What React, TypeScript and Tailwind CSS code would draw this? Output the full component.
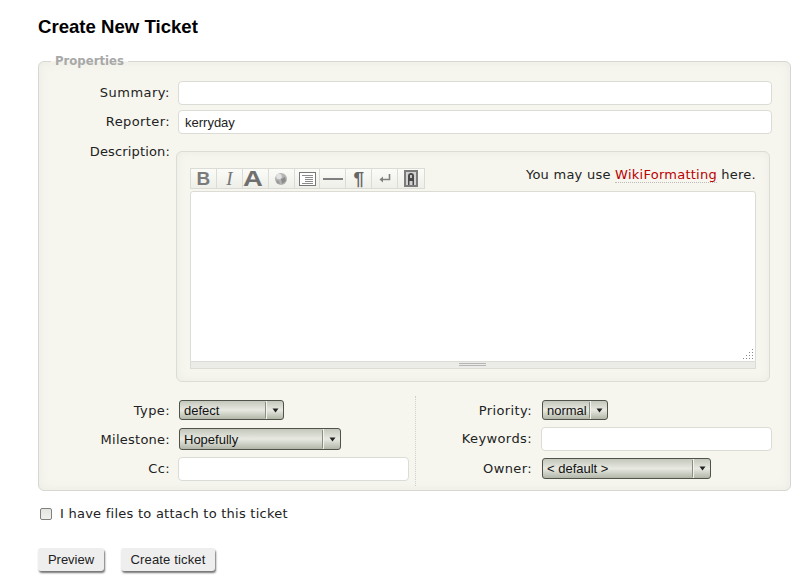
import React from "react";

const body = "font-['DejaVu_Sans',sans-serif] text-[13px] text-[#222]";
const arial = "font-['Liberation_Sans',Arial,sans-serif]";

function TextInput({ value, className = "" }: { value?: string; className?: string }) {
  return (
    <input
      readOnly
      value={value ?? ""}
      className={`h-6 rounded-[4px] border border-[#dcdcd6] bg-white px-[6px] text-[13px] text-[#222] outline-none ${arial} ${className}`}
    />
  );
}

function Select({ label, className = "" }: { label: string; className?: string }) {
  return (
    <div
      className={`flex items-stretch rounded-[3px] border border-[#4f5349] bg-gradient-to-b from-[#c4c7bb] via-[#e8eae2] to-[#b2b6a8] text-[13px] text-[#111] ${arial} ${className}`}
    >
      <span className="flex flex-1 items-center pt-[1px] pl-1 whitespace-nowrap">{label}</span>
      <span className="my-[1px] w-px bg-[#8b8e83]" />
      <span className="flex w-[17px] items-center justify-center border-l border-[#f2f3ee]">
        <svg width="7" height="5" viewBox="0 0 7 5">
          <path d="M0.5 0.5h6L3.5 4.5z" fill="#222" />
        </svg>
      </span>
    </div>
  );
}

function Label({
  children,
  className = "",
  track = "tracking-[0.4px]",
}: {
  children: React.ReactNode;
  className?: string;
  track?: string;
}) {
  return <span className={`text-right ${track} ${className}`}>{children}</span>;
}

function ToolButton({ children, last }: { children: React.ReactNode; last?: boolean }) {
  return (
    <div className={`flex h-full w-[26px] items-center justify-center ${last ? "" : "border-r border-[#dcdcd6]"}`}>
      {children}
    </div>
  );
}

function Toolbar() {
  return (
    <div className="flex h-[21px] w-[235px] border border-[#dcdcd6] bg-gradient-to-b from-[#fbfbf8] to-[#efefe9]">
      <ToolButton>
        <span className={`text-[19px] leading-none font-bold text-[#7b7b7b] ${arial}`}>B</span>
      </ToolButton>
      <ToolButton>
        <span className="font-['Liberation_Serif',serif] text-[19px] leading-none text-[#777] italic">I</span>
      </ToolButton>
      <ToolButton>
        <span className={`mr-1 inline-block scale-x-[1.25] text-[22px] leading-[19px] font-bold text-[#6f6f6f] ${arial}`}>A</span>
      </ToolButton>
      <ToolButton>
        <svg width="14" height="14" viewBox="0 0 14 14">
          <circle cx="7" cy="7" r="6" fill="#b4b4b4" />
          <circle cx="5" cy="4.5" r="2.8" fill="#e2e2e2" />
          <path d="M7 7l4-2 1 4-4 3z" fill="#8c8c8c" />
          <path d="M2 8l3 1 1 3-3-1z" fill="#989898" />
        </svg>
      </ToolButton>
      <ToolButton>
        <svg width="17" height="14" viewBox="0 0 17 14">
          <rect x="0.5" y="0.5" width="16" height="13" fill="#fff" stroke="#777" />
          <path d="M3 3.5h11M6 5.5h8M6 7.5h8M6 9.5h8M3 11.5h11" stroke="#8a8a8a" strokeWidth="1" />
        </svg>
      </ToolButton>
      <ToolButton>
        <div className="h-[2px] w-5 bg-[#808080]" />
      </ToolButton>
      <ToolButton>
        <span className={`text-[19px] leading-none font-bold text-[#666] ${arial}`}>¶</span>
      </ToolButton>
      <ToolButton>
        <svg width="12" height="9" viewBox="0 0 12 9">
          <path d="M10.5 0v5.5H3" fill="none" stroke="#808080" strokeWidth="1.6" />
          <path d="M4 2.5v6L0.5 5.5z" fill="#808080" />
        </svg>
      </ToolButton>
      <ToolButton last>
        <svg width="14" height="17" viewBox="0 0 14 17">
          <rect width="14" height="17" fill="#7c7c7c" />
          <rect x="2" y="2" width="10" height="13" fill="#d2d2d2" />
          <path d="M4 15V6a3 3 0 0 1 6 0v9h-1.500v-4h-3v4z" fill="#4a4a4a" />
          <rect x="6" y="5" width="2" height="3" fill="#c4c4c4" />
        </svg>
      </ToolButton>
    </div>
  );
}

function Editor() {
  return (
    <div className="w-[594px] rounded-[6px] border border-[#dcdcd6] bg-[#f6f6ef] px-[13px] pt-4 pb-[12px] shadow-[inset_0_0_10px_#ebebe4]">
      <div className="flex h-[22px] items-start justify-between">
        <Toolbar />
        <span className="-mt-[3px] tracking-[0.25px]">
          You may use{" "}
          <span className="border-b border-dotted border-[#bbb] text-[#b00]">WikiFormatting</span> here.
        </span>
      </div>
      <div className="relative mt-[1px] h-[171px] rounded-t-[3px] border border-[#dcdcd6] bg-white">
        <svg className="absolute right-[1px] bottom-[1px]" width="11" height="11" viewBox="0 0 11 11" fill="#888">
          <rect x="9" y="0" width="1" height="1" />
          <rect x="6" y="3" width="1" height="1" />
          <rect x="9" y="3" width="1" height="1" />
          <rect x="3" y="6" width="1" height="1" />
          <rect x="6" y="6" width="1" height="1" />
          <rect x="9" y="6" width="1" height="1" />
          <rect x="0" y="9" width="1" height="1" />
          <rect x="3" y="9" width="1" height="1" />
          <rect x="6" y="9" width="1" height="1" />
          <rect x="9" y="9" width="1" height="1" />
        </svg>
      </div>
      <div className="flex h-[7px] justify-center border-x border-b border-[#dcdcd6] bg-[#ebebe8]">
        <div className="mt-[1px] mr-[2px] h-[3px] w-[27px] border-y border-[#b5b5b5]" />
      </div>
    </div>
  );
}

export default function App() {
  return (
    <div className={`min-h-[578px] w-[802px] overflow-hidden bg-white pl-[38px] ${body}`}>
      <h1 className={`pt-[16px] text-[18.6px] leading-[22px] font-bold text-black ${arial}`}>Create New Ticket</h1>

      <fieldset className="mt-[17px] h-[436px] w-[753px] rounded-[6px] border border-[#d7d7d1] bg-[#f6f6ef] shadow-[inset_0_0_12px_#ebebe4]">
        <legend className="ml-[12px] px-1 text-[11.7px] leading-[13px] font-bold text-[#a8a8a8]">Properties</legend>

        <div className="flex flex-col pt-[13px]">
          <div className="flex h-6 items-center">
            <Label className="w-[131px]" track="tracking-[0.5px]">Summary:</Label>
            <TextInput className="ml-[8px] w-[594px]" />
          </div>
          <div className="mt-[5px] flex h-6 items-center">
            <Label className="w-[131px]">Reporter:</Label>
            <TextInput value="kerryday" className="ml-[8px] w-[594px]" />
          </div>
          <div className="mt-[17px] flex items-start">
            <Label className="-mt-[7px] w-[131px] leading-[16px]" track="tracking-[0.15px]">Description:</Label>
            <div className="ml-[6px]">
              <Editor />
            </div>
          </div>
        </div>

        <div className="mt-[14px] flex">
          <div className="flex h-[90px] w-[377px] flex-col border-r border-dotted border-[#d0d0ca] pt-[4px]">
            <div className="flex h-5 items-center">
              <Label className="w-[131px] pt-[2px]">Type:</Label>
              <Select label="defect" className="ml-[9px] h-5 w-[105px]" />
            </div>
            <div className="mt-2 flex h-[22px] items-center">
              <Label className="w-[131px] pt-[2px]" track="tracking-[0.25px]">Milestone:</Label>
              <Select label="Hopefully" className="ml-[9px] h-[22px] w-[162px]" />
            </div>
            <div className="mt-[7px] flex h-6 items-center">
              <Label className="w-[131px]">Cc:</Label>
              <TextInput className="ml-[8px] w-[231px]" />
            </div>
          </div>
          <div className="flex flex-col pt-[4px]">
            <div className="flex h-5 items-center">
              <Label className="w-[116px] pt-[2px]">Priority:</Label>
              <Select label="normal" className="ml-[10px] h-5 w-[66px]" />
            </div>
            <div className="mt-[7px] flex h-6 items-center">
              <Label className="w-[116px]">Keywords:</Label>
              <TextInput className="ml-[9px] w-[231px]" />
            </div>
            <div className="mt-[7px] flex h-[21px] items-center">
              <Label className="w-[116px]">Owner:</Label>
              <Select label="< default >" className="ml-[10px] h-[21px] w-[169px]" />
            </div>
          </div>
        </div>
      </fieldset>

      <div className="mt-[15px] flex h-4 items-center">
        <span className="ml-[2px] h-3 w-3 rounded-[2px] border border-[#808080] bg-gradient-to-b from-[#e4e4e0] to-[#f0f0ec]" />
        <span className="ml-2 tracking-[0.25px]">I have files to attach to this ticket</span>
      </div>

      <div className={`mt-[26px] flex gap-[17px] text-[13px] text-[#222] ${arial}`}>
        <button className="h-[23px] w-[66px] rounded-[3px] bg-[#eeeeee] shadow-[1px_2px_2px_rgba(0,0,0,0.55)]">Preview</button>
        <button className="h-[23px] w-[94px] rounded-[3px] bg-[#eeeeee] tracking-[0.15px] shadow-[1px_2px_2px_rgba(0,0,0,0.55)]">Create ticket</button>
      </div>
    </div>
  );
}
